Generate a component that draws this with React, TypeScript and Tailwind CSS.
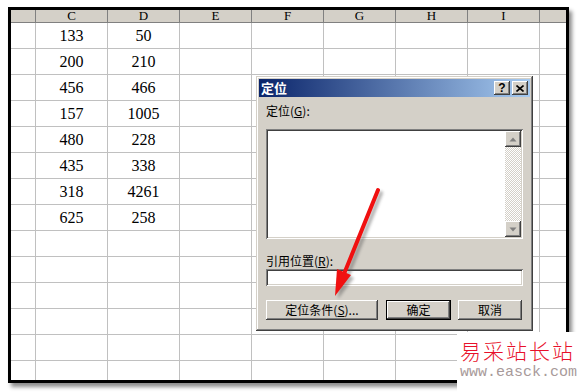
import React from "react";

// 表格数据：C 列与 D 列
const rows: [number, number][] = [
  [133, 50],
  [200, 210],
  [456, 466],
  [157, 1005],
  [480, 228],
  [435, 338],
  [318, 4261],
  [625, 258],
];

const cols = ["C", "D", "E", "F", "G", "H", "I"];

const raised =
  "shadow-[inset_-1px_-1px_#404040,inset_1px_1px_#ffffff,inset_-2px_-2px_#808080,inset_2px_2px_#d4d0c8]";
const sunken =
  "shadow-[inset_1px_1px_#808080,inset_-1px_-1px_#ffffff,inset_2px_2px_#404040,inset_-2px_-2px_#d4d0c8]";

function Sheet() {
  const body = Array.from({ length: 14 }, (_, i) => rows[i]);
  return (
    <div className="ml-[8px] mt-[7px] w-[561px] h-[376px] border-[3px] border-black bg-white overflow-hidden shadow-[3px_4px_4px_rgba(0,0,0,0.45)] font-['Liberation_Serif',serif]">
      {/* 列标题 */}
      <div className="flex h-[13px] bg-[#d4d0c8] border-b border-[#808080]">
        <div className="w-[25px] border-r border-[#808080]" />
        {cols.map((c) => (
          <div
            key={c}
            className="w-[72px] border-r border-[#808080] flex justify-center text-[13px] leading-[12px] text-black"
          >
            {c}
          </div>
        ))}
        <div className="flex-1" />
      </div>
      {/* 单元格 */}
      {body.map((r, i) => (
        <div key={i} className="flex h-[26px] border-b border-[#c0c0c0]">
          <div className="w-[25px] border-r border-[#c0c0c0]" />
          {cols.map((c, j) => (
            <div
              key={c}
              className="w-[72px] border-r border-[#c0c0c0] flex items-center justify-center text-[16px] text-black"
            >
              {r && j < 2 ? r[j] : ""}
            </div>
          ))}
          <div className="flex-1" />
        </div>
      ))}
    </div>
  );
}

function ScrollArrow({ up }: { up: boolean }) {
  return (
    <div className={`w-[16px] h-[16px] bg-[#d4d0c8] ${raised} flex items-center justify-center`}>
      <svg width="8" height="5" viewBox="0 0 8 5">
        {up ? (
          <polygon points="4,0.5 7.5,4.5 0.5,4.5" fill="#808080" />
        ) : (
          <polygon points="0.5,0.5 7.5,0.5 4,4.5" fill="#808080" />
        )}
      </svg>
    </div>
  );
}

function Dialog() {
  return (
    <div
      className={`absolute left-[256px] top-[76px] w-[277px] h-[255px] bg-[#d4d0c8] p-[3px] shadow-[inset_-1px_-1px_#404040,inset_1px_1px_#d4d0c8,inset_-2px_-2px_#808080,inset_2px_2px_#ffffff] font-['Noto_Sans_CJK_SC',sans-serif]`}
    >
      {/* 标题栏 */}
      <div className="h-[18px] flex items-center justify-between pl-[2px] pr-[2px] bg-[linear-gradient(to_right,#0a246a,#a6caf0)]">
        <span className="text-white font-bold text-[13px] leading-[14px]">定位</span>
        <div className="flex gap-[2px]">
          <div className={`w-[16px] h-[14px] bg-[#d4d0c8] ${raised} flex items-center justify-center text-[12px] font-bold leading-none font-['Liberation_Sans',sans-serif]`}>
            ?
          </div>
          <div className={`w-[16px] h-[14px] bg-[#d4d0c8] ${raised} flex items-center justify-center`}>
            <svg width="8" height="7" viewBox="0 0 8 7">
              <path d="M0.5 0.5 L7.5 6.5 M7.5 0.5 L0.5 6.5" stroke="#000" strokeWidth="1.6" />
            </svg>
          </div>
        </div>
      </div>

      <div className="px-[7px] flex flex-col text-[12px] text-black">
        <div className="mt-[7px] h-[14px] leading-[14px]">
          定位(<span className="underline">G</span>):
        </div>
        <div className={`mt-[11px] h-[110px] bg-white ${sunken} p-[2px] flex justify-end`}>
          <div className="w-[16px] h-full flex flex-col bg-[image:repeating-conic-gradient(#d4d0c8_0_25%,#ffffff_0_50%)] bg-[length:2px_2px]">
            <ScrollArrow up />
            <div className="flex-1" />
            <ScrollArrow up={false} />
          </div>
        </div>
        <div className="mt-[15px] h-[14px] leading-[14px]">
          引用位置(<span className="underline">R</span>):
        </div>
        <div className={`mt-[1px] h-[17px] bg-white ${sunken}`} />
        <div className="mt-[14px] flex">
          <div className={`w-[112px] h-[20px] ${raised} flex items-center justify-center`}>
            定位条件(<span className="underline">S</span>)...
          </div>
          <div className="ml-[8px] w-[65px] h-[20px] border border-black">
            <div className={`h-full ${raised} flex items-center justify-center`}>确定</div>
          </div>
          <div className={`ml-[7px] w-[64px] h-[20px] ${raised} flex items-center justify-center`}>
            取消
          </div>
        </div>
      </div>
    </div>
  );
}

function Arrow() {
  return (
    <svg className="absolute left-0 top-0 pointer-events-none" width="577" height="392" viewBox="0 0 577 392">
      <defs>
        <filter id="sh" x="-50%" y="-50%" width="200%" height="200%">
          <feGaussianBlur stdDeviation="1.5" />
        </filter>
      </defs>
      <g transform="translate(3,3)" opacity="0.45" filter="url(#sh)">
        <line x1="378" y1="190" x2="344" y2="274" stroke="#555" strokeWidth="4" strokeLinecap="round" />
        <polygon points="335,296 337,269 351,275" fill="#555" />
      </g>
      <line x1="378" y1="190" x2="344" y2="274" stroke="#f01010" strokeWidth="4" strokeLinecap="round" />
      <polygon points="335,296 337,269 351,275" fill="#f01010" />
    </svg>
  );
}

function Watermark() {
  return (
    <div className="absolute left-[457px] top-[332px] w-[120px] h-[60px] bg-white flex flex-col pl-[3px] pt-[7px]">
      <div className="h-[22px] text-[21px] leading-[22px] tracking-[2px] font-light text-[#e8102a] whitespace-nowrap font-['Noto_Sans_CJK_SC',sans-serif]">
        易采站长站
      </div>
      <div className="mt-[4px] h-[15px] text-[15px] leading-[15px] text-[#a89a9a] whitespace-nowrap font-['Liberation_Mono',monospace]">
        www.easck.com
      </div>
    </div>
  );
}

export default function App() {
  return (
    <div className="relative w-[577px] h-[392px] bg-white overflow-hidden">
      <Sheet />
      <Dialog />
      <Arrow />
      <Watermark />
    </div>
  );
}
